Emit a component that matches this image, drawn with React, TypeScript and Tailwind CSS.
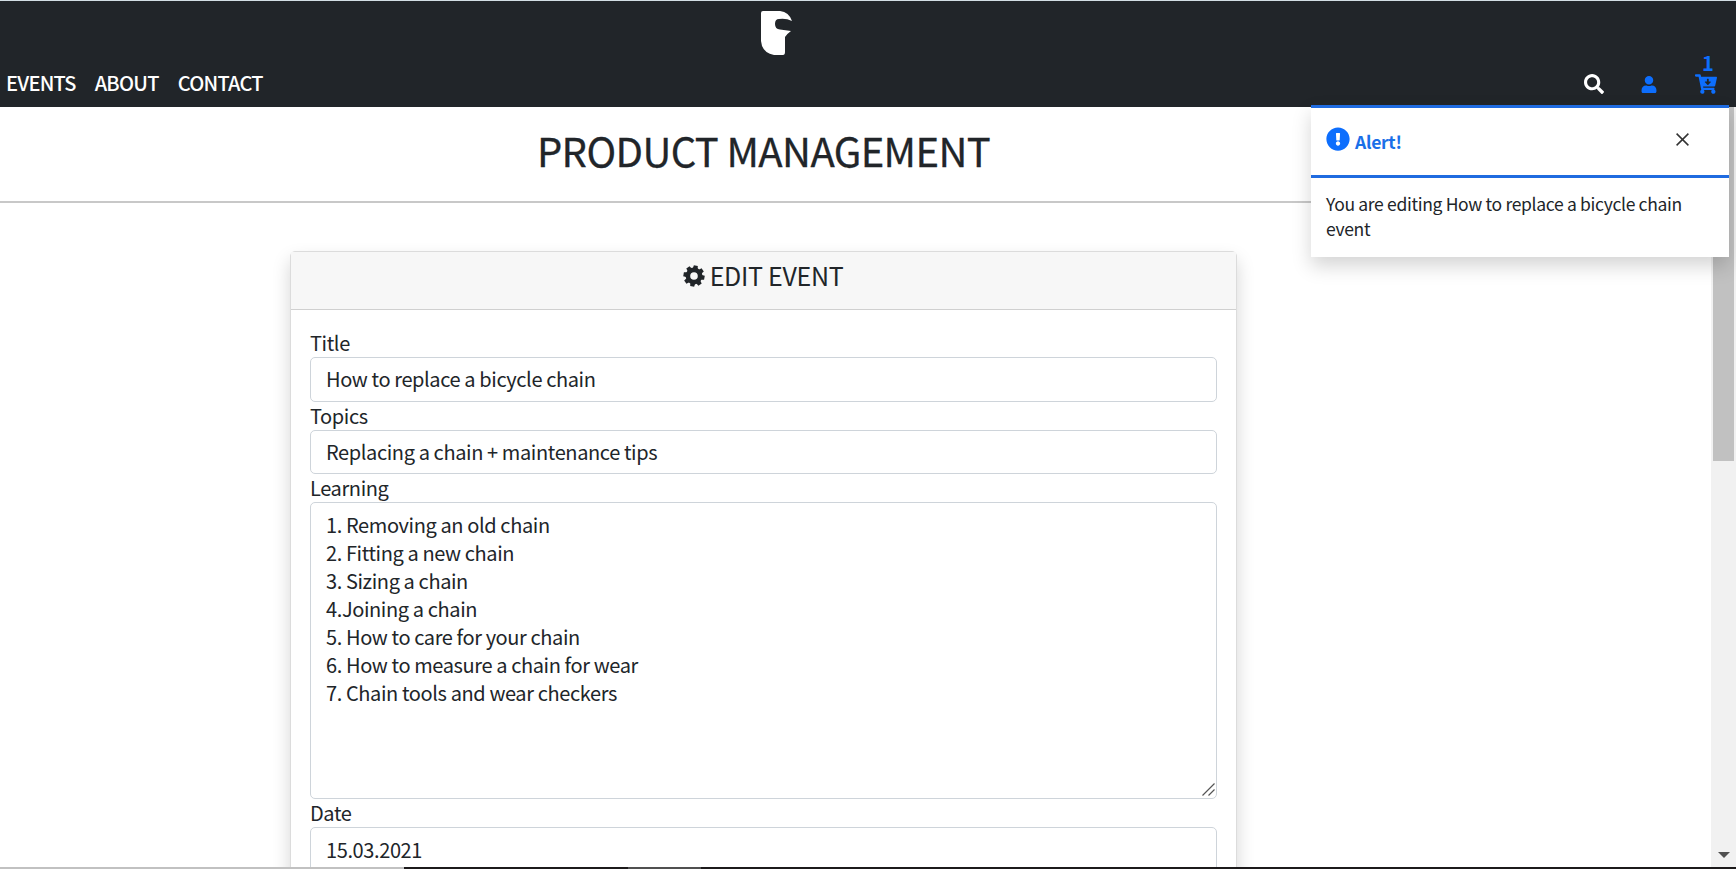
import { FaSearch, FaUser, FaCartArrowDown, FaExclamationCircle } from 'react-icons/fa';

const learning = [
  '1. Removing an old chain',
  '2. Fitting a new chain',
  '3. Sizing a chain',
  '4.Joining a chain',
  '5. How to care for your chain',
  '6. How to measure a chain for wear',
  '7. Chain tools and wear checkers',
].join('\n');

const field =
  'block w-full rounded-[5px] border border-[#ced4da] bg-white px-[15px] text-[20px] tracking-[-0.39px] text-[#212529] outline-none';
const label = 'block text-[20px] leading-[28px] tracking-[-0.39px]';

const teeth = [10, 55, 100, 145, 190, 235, 280, 325];

function Gear() {
  return (
    <svg className="mt-[6px] size-[22px]" viewBox="-11 -11 22 22" fill="#212529">
      <circle r="6.1" fill="none" stroke="#212529" strokeWidth="4.6" />
      {teeth.map((a) => (
        <path key={a} d="M-2.4 -7.6-2 -10.6H2L2.4 -7.6Z" transform={`rotate(${a})`} />
      ))}
    </svg>
  );
}

function Header() {
  return (
    <header className="flex h-[107px] shrink-0 flex-col border-t border-[#d3dee4] bg-[#212529]">
      <div className="flex h-[60px] justify-center pt-[10px] pr-[183px]">
        <svg className="h-[44px] w-[32px]" viewBox="0 0 32 44" fill="#fff">
          <path d="M0 2Q0 0 2 0H19Q28 1 31 10Q25 7 18 8Q14 8 14 13Q14 18 19 18.500L30 20Q27 22 24 26V41Q24 44 22 44H13Q1 42 0 30Z" />
        </svg>
      </div>
      <div className="flex h-[46px] items-center justify-between pr-[19px] pl-[6px]">
        <nav className="mb-[2px] flex gap-[19px] text-[20px] leading-[28px] font-medium tracking-[-0.75px] text-white">
          <a>EVENTS</a>
          <a>ABOUT</a>
          <a>CONTACT</a>
        </nav>
        <div className="flex items-center text-[#0d6efd]">
          <FaSearch className="size-[20px] text-white" />
          <FaUser className="ml-[37px] h-[17px] w-[16px]" />
          <div className="relative ml-[38px]">
            <span className="absolute -top-[25px] left-[7px] text-[20px] leading-[28px] font-bold">1</span>
            <FaCartArrowDown className="h-[20px] w-[22px]" />
          </div>
        </div>
      </div>
    </header>
  );
}

function Toast() {
  return (
    <div className="absolute top-[105px] left-[1311px] h-[152px] w-[418px] bg-white shadow-[0_9px_18px_rgba(0,0,0,0.17)]">
      <div className="flex h-[73px] items-center justify-between border-y-[3px] border-[#1f6be0] pr-[40px] pl-[15px]">
        <div className="flex items-center text-[#1a6fe8]">
          <FaExclamationCircle className="mb-[5px] size-[24px] text-[#0d6efd]" />
          <strong className="ml-[5px] text-[17.5px] leading-[26px] font-bold tracking-[-0.3px]">Alert!</strong>
        </div>
        <svg className="mb-[4px] size-[13px]" viewBox="0 0 13 13" stroke="#333" strokeWidth="1.5">
          <path d="M.6.6 12.4 12.4M12.4.6.6 12.4" />
        </svg>
      </div>
      <p className="pt-[13px] pr-[15px] pl-[15px] text-[17.5px] leading-[25px] tracking-[-0.33px]">
        You are editing How to replace a bicycle chain event
      </p>
    </div>
  );
}

export default function App() {
  return (
    <div className="relative flex h-[869px] w-[1736px] flex-col overflow-hidden bg-white font-['Noto_Sans_CJK_JP',sans-serif] text-[#212529]">
      <Header />
      <div className="flex min-h-0 flex-1">
        <main className="w-[1711px] overflow-hidden">
          <div className="flex h-[96px] justify-center border-b-2 border-[#c8c8c8] pt-[18px] pr-[184px]">
            <h1 className="text-[40px] leading-[50px] font-normal tracking-[-0.6px] [-webkit-text-stroke:0.3px_#212529]">
              PRODUCT MANAGEMENT
            </h1>
          </div>
          <section className="mt-[48px] ml-[290px] h-[800px] w-[947px] rounded-[5px] border border-[#dcdcdc] shadow-[0_9px_18px_rgba(0,0,0,0.17)]">
            <h2 className="flex h-[58px] items-start justify-center gap-[5px] border-b border-[#d0d0d0] bg-[#f7f7f7] pt-[7px] pr-px text-[25px] leading-[32px] tracking-[-0.3px]">
              <Gear />
              EDIT EVENT
            </h2>
            <div className="px-[19px] pt-[19px]">
              <label className={label}>Title</label>
              <input className={`${field} h-[45px] pb-[2px]`} defaultValue="How to replace a bicycle chain" />
              <label className={label}>Topics</label>
              <input className={`${field} h-[44px] pb-[2px]`} defaultValue="Replacing a chain + maintenance tips" />
              <label className={label}>Learning</label>
              <div className="relative">
                <textarea
                  className={`${field} h-[297px] resize-none py-[8px] leading-[28px]`}
                  spellCheck={false}
                  defaultValue={learning}
                />
                <svg className="absolute right-[2px] bottom-[3px] size-[13px]" viewBox="0 0 13 13" stroke="#555" strokeWidth="1.2">
                  <path d="M.5 12.500 12.500.5M6.500 12.500 12.500 6.500" />
                </svg>
              </div>
              <label className={label}>Date</label>
              <input className={`${field} h-[45px]`} defaultValue="15.03.2021" />
            </div>
          </section>
        </main>
        <aside className="flex w-[25px] flex-col items-center justify-between bg-[#f1f1f1] pb-[9px]">
          <div className="h-[354px] w-[21px] bg-[#c1c1c1]" />
          <svg className="h-[6px] w-[12px]" viewBox="0 0 12 6" fill="#505050"><path d="M0 0H12L6 6Z" /></svg>
        </aside>
      </div>
      <footer className="flex h-[2px] shrink-0 bg-[#1c1a1b]">
        <div className="w-[404px] bg-[#c1c1c1]" />
        <div className="ml-[224px] w-[73px] bg-[#505050]" />
      </footer>
      <Toast />
    </div>
  );
}
